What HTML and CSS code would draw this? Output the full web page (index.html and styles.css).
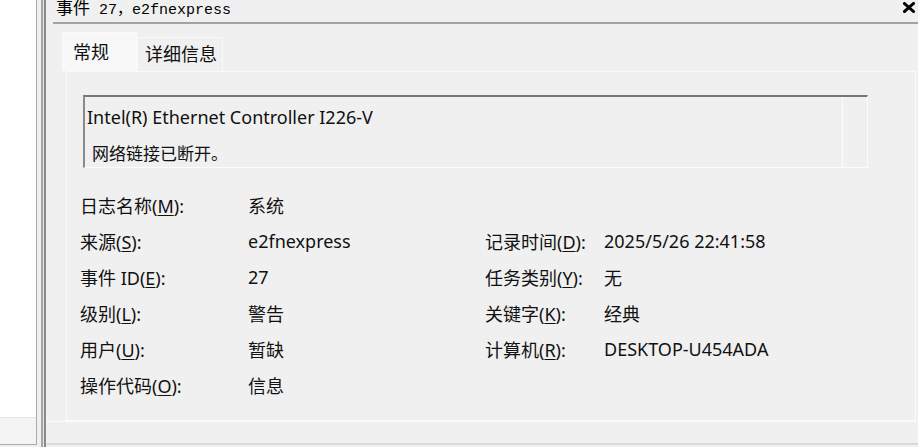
FILE: index.html
```html
<!DOCTYPE html>
<html lang="zh-CN">
<head>
    <meta charset="UTF-8">
    <meta name="viewport" content="width=device-width, initial-scale=1.0">
    <title>事件 27，e2fnexpress</title>
    <link rel="stylesheet" href="styles.css">
</head>
<body>
    <div class="screen">
        <div class="side-list">
            <div class="side-body"></div>
            <div class="side-foot"></div>
        </div>
        <div class="splitter"></div>

        <div class="dialog">
            <div class="titlebar">
                <span class="title"><span class="title-cjk">事件</span> 27，e2fnexpress</span>
                <svg class="close" width="12" height="11" viewBox="0 0 12 11">
                    <path d="M1.5 1.5 L10.5 9.5 M10.5 1.5 L1.5 9.5" stroke="#000" stroke-width="3" stroke-linecap="square"/>
                </svg>
            </div>

            <div class="tabs">
                <div class="tab active">常规</div>
                <div class="tab">详细信息</div>
            </div>

            <div class="tab-panel">
                <div class="message-box">
                    <div class="message-text">
                        <div class="msg-line">Intel(R) Ethernet Controller I226-V</div>
                        <div class="msg-line msg-cn">网络链接已断开。</div>
                    </div>
                    <div class="message-scroll"></div>
                </div>

                <div class="fields">
                    <div class="label">日志名称(<u>M</u>):</div>
                    <div class="value">系统</div>
                    <div></div>
                    <div></div>

                    <div class="label">来源(<u>S</u>):</div>
                    <div class="value">e2fnexpress</div>
                    <div class="label">记录时间(<u>D</u>):</div>
                    <div class="value">2025/5/26 22:41:58</div>

                    <div class="label">事件 ID(<u>E</u>):</div>
                    <div class="value">27</div>
                    <div class="label">任务类别(<u>Y</u>):</div>
                    <div class="value">无</div>

                    <div class="label">级别(<u>L</u>):</div>
                    <div class="value">警告</div>
                    <div class="label">关键字(<u>K</u>):</div>
                    <div class="value">经典</div>

                    <div class="label">用户(<u>U</u>):</div>
                    <div class="value">暂缺</div>
                    <div class="label">计算机(<u>R</u>):</div>
                    <div class="value">DESKTOP-U454ADA</div>

                    <div class="label">操作代码(<u>O</u>):</div>
                    <div class="value">信息</div>
                    <div></div>
                    <div></div>
                </div>
            </div>
            <div class="dialog-foot"></div>
        </div>
    </div>
</body>
</html>
```

FILE: styles.css
```css
body {
    margin: 0;
    padding: 0;
    background-color: #f0f0f0;
    font-family: "Noto Sans", "Noto Sans CJK SC", sans-serif;
    color: #111;
    overflow: hidden;
}

.screen {
    display: flex;
    width: 918px;
    height: 447px;
}

/* left list pane, mostly cut off */
.side-list {
    width: 36px;
    display: flex;
    flex-direction: column;
    background-color: #fff;
    border-right: 1px solid #a9a9a9;
    border-bottom: 1px solid #a9a9a9;
    height: 444px;
}

.side-body {
    flex: 1;
}

.side-foot {
    height: 26px;
    background-color: #f4f4f4;
    border-top: 1px solid #e6e6e6;
}

.splitter {
    width: 9px;
    background: linear-gradient(to right,
        #f0f0f0 0 4px,
        #a6a6a6 4px 6px,
        #e4e4e4 6px 7px,
        #8a8a8a 7px 9px);
}

.dialog {
    flex: 1;
    display: flex;
    flex-direction: column;
}

.titlebar {
    display: flex;
    justify-content: space-between;
    align-items: flex-start;
    height: 22px;
    margin-left: 7px;
    padding-left: 3px;
    padding-right: 3px;
    border-bottom: 2px solid #a3a3a3;
    overflow: hidden;
}

.title {
    font-family: "Liberation Mono", "Noto Sans CJK SC", monospace;
    font-size: 15px;
    line-height: 16px;
    margin-top: -1px;
    color: #000;
}

.title-cjk {
    font-family: "Noto Sans CJK SC", sans-serif;
    font-size: 17px;
}

.close {
    margin-top: 2px;
}

.tabs {
    display: flex;
    align-items: flex-end;
    margin-top: 8px;
    margin-left: 16px;
    height: 39px;
}

.tab {
    font-size: 18px;
    line-height: 22px;
    height: 34px;
    box-sizing: border-box;
    padding: 5px 5px 0 7px;
    background-color: #f0f0f0;
    border: 1px solid #fafafa;
    border-bottom: none;
}

.tab.active {
    height: 39px;
    width: 75px;
    padding: 8px 0 0 10px;
    background-color: #f8f8f8;
    border-color: #fbfbfb;
}

.tab-panel {
    margin-left: 20px;
    margin-right: 2px;
    height: 350px;
    box-sizing: border-box;
    border: 1px solid #fafafa;
    padding: 23px 0 0 16px;
}

.message-box {
    display: flex;
    width: 785px;
    height: 73px;
    box-sizing: border-box;
    border-top: 2px solid #767676;
    border-left: 2px solid #8a8a8a;
    border-right: 1px solid #fcfcfc;
    border-bottom: 1px solid #fcfcfc;
}

.message-text {
    flex: 1;
    padding: 2px 0 0 2px;
}

.msg-line {
    font-size: 18px;
    line-height: 36px;
    height: 36px;
}

.msg-line.msg-cn {
    margin-top: 1px;
    padding-left: 5px;
    font-size: 17px;
}

.message-scroll {
    width: 24px;
    border-left: 1px solid #fdfdfd;
}

.fields {
    display: grid;
    grid-template-columns: 168px 237px 119px 1fr;
    grid-auto-rows: 36px;
    margin-top: 19px;
    margin-left: -3px;
    font-size: 18px;
    align-items: center;
}

.label u {
    text-underline-offset: 2px;
}

.dialog-foot {
    flex: 1;
    border-top: 1px solid #fcfcfc;
    border-bottom: 2px solid #d9d9d9;
    margin-bottom: 2px;
}
```
